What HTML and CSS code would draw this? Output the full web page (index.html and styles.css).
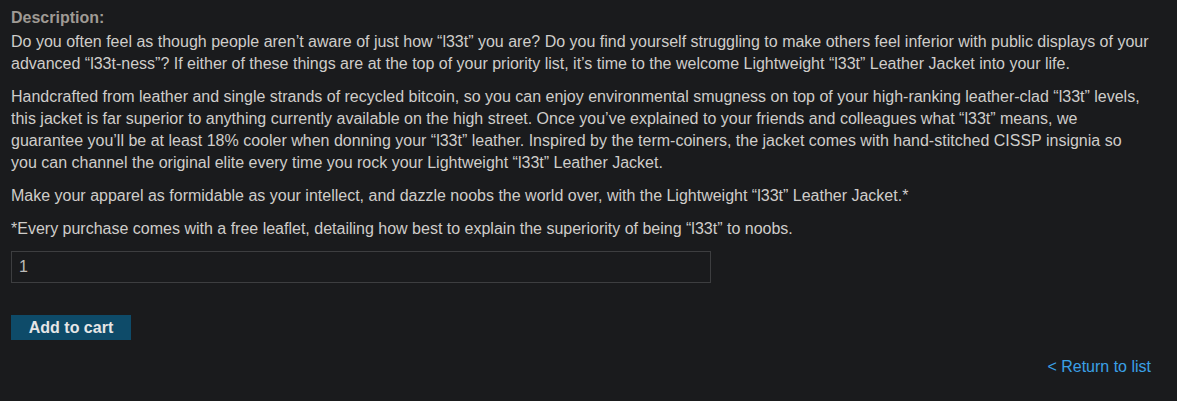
FILE: index.html
```html
<!DOCTYPE html>
<html>
<head>
<meta charset="utf-8">
<link rel="stylesheet" href="styles.css">
</head>
<body>
<div class="page">
  <div class="label">Description:</div>
  <p>Do you often feel as though people aren’t aware of just how “l33t” you are? Do you find yourself struggling to make others feel inferior with public displays of your advanced “l33t-ness”? If either of these things are at the top of your priority list, it’s time to the welcome Lightweight “l33t” Leather Jacket into your life.</p>
  <p>Handcrafted from leather and single strands of recycled bitcoin, so you can enjoy environmental smugness on top of your high-ranking leather-clad “l33t” levels, this jacket is far superior to anything currently available on the high street. Once you’ve explained to your friends and colleagues what “l33t” means, we guarantee you’ll be at least 18% cooler when donning your “l33t” leather. Inspired by the term-coiners, the jacket comes with hand-stitched CISSP insignia so you can channel the original elite every time you rock your Lightweight “l33t” Leather Jacket.</p>
  <p>Make your apparel as formidable as your intellect, and dazzle noobs the world over, with the Lightweight “l33t” Leather Jacket.*</p>
  <p>*Every purchase comes with a free leaflet, detailing how best to explain the superiority of being “l33t” to noobs.</p>
  <form class="cart">
    <input class="qty" type="text" value="1">
    <button class="btn" type="button">Add to cart</button>
  </form>
  <div class="back"><a href="#">&lt; Return to list</a></div>
</div>
</body>
</html>
```
FILE: styles.css
```css
html, body {
  margin: 0;
  padding: 0;
  background: #1a1b1d;
}
body {
  font-family: "Liberation Sans", Arial, sans-serif;
  font-size: 16px;
  line-height: 22px;
  color: #cfcdca;
}
.page {
  width: 1138px;
  padding: 7px 0 0 11px;
}
.label {
  font-weight: bold;
  color: #9f9a94;
  margin-bottom: 2px;
}
p {
  margin: 0 0 11px;
}
.cart {
  display: flex;
  flex-direction: column;
  align-items: flex-start;
  gap: 32px;
}
.qty {
  box-sizing: border-box;
  width: 700px;
  height: 32px;
  margin: 0;
  padding: 0 7px;
  background: #1a1b1d;
  border: 1px solid #3d3e40;
  color: #bdbbb8;
  font-family: "Liberation Sans", Arial, sans-serif;
  font-size: 16px;
  outline: none;
}
.btn {
  box-sizing: border-box;
  width: 120px;
  height: 25px;
  margin: 0;
  padding: 0;
  border: none;
  background: #0e4b69;
  color: #e6e6e6;
  font-family: "Liberation Sans", Arial, sans-serif;
  font-size: 16px;
  font-weight: bold;
  line-height: 25px;
}
.back {
  display: flex;
  justify-content: flex-end;
  margin-top: 16px;
  margin-right: -2px;
}
.back a {
  color: #3aa0e6;
  text-decoration: none;
}
```
